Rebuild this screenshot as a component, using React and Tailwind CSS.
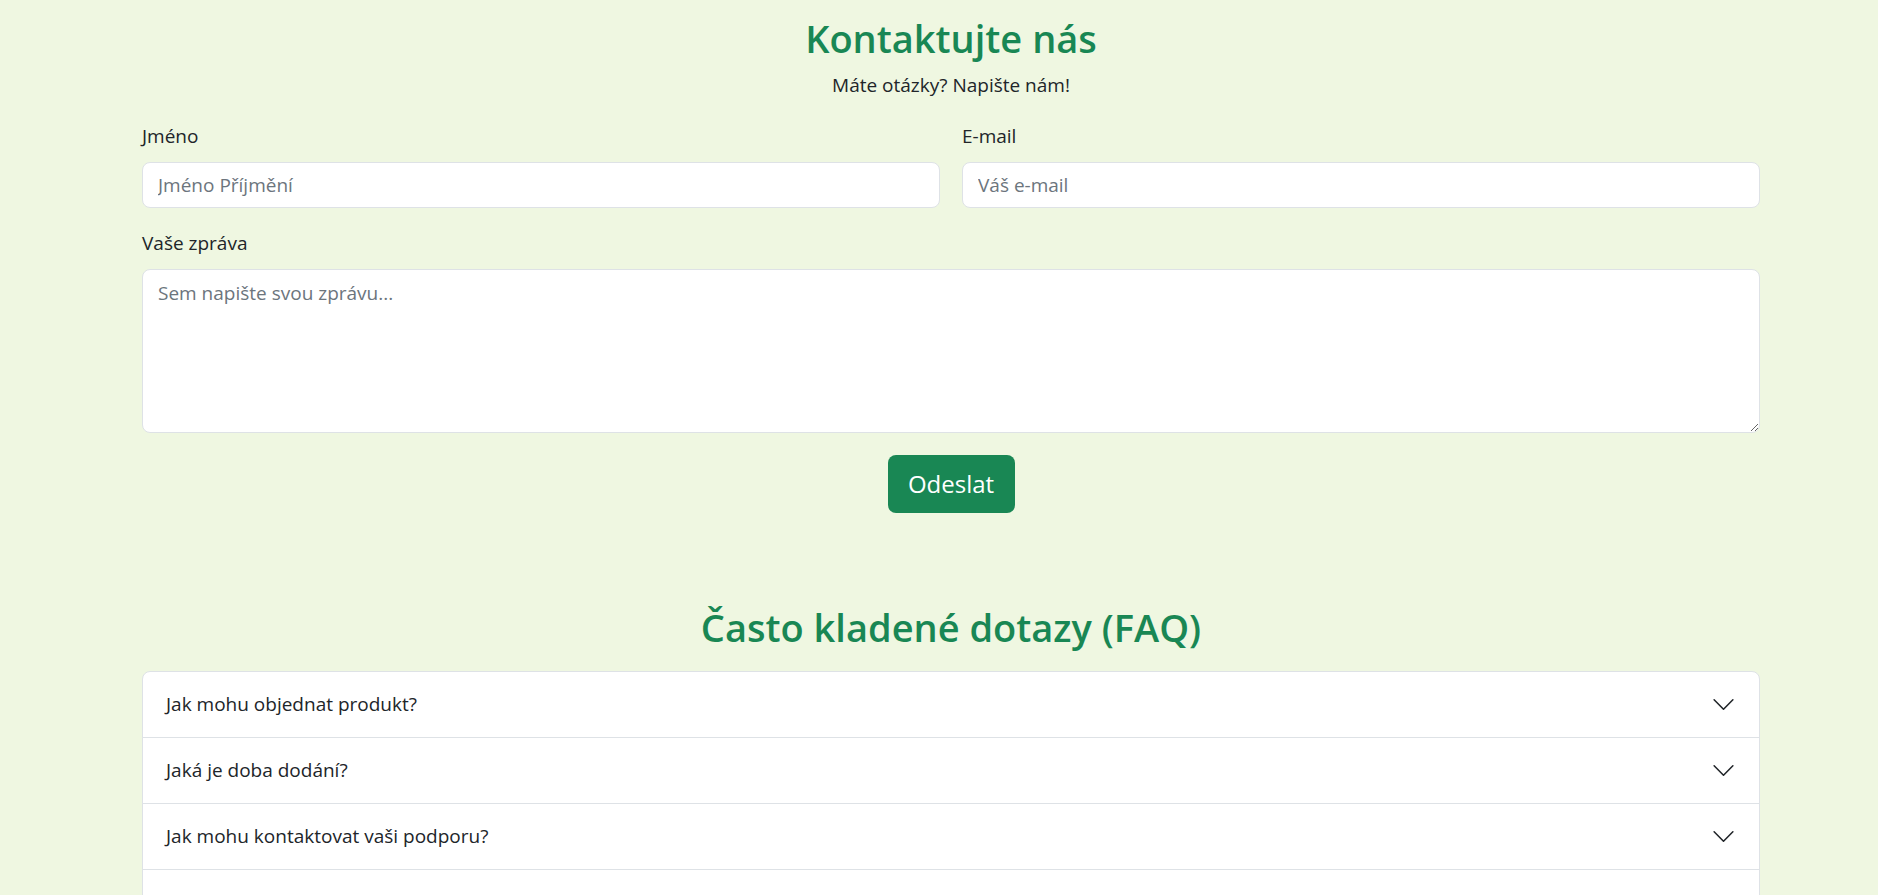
import { useState } from 'react'

const faqs = [
  { q: 'Jak mohu objednat produkt?', a: 'Vyberte si produkt, vložte ho do košíku a dokončete objednávku.' },
  { q: 'Jaká je doba dodání?', a: 'Obvykle doručujeme do 2–3 pracovních dnů.' },
  { q: 'Jak mohu kontaktovat vaši podporu?', a: 'Napište nám přes formulář výše nebo na e-mail.' },
  { q: 'Mohu zboží vrátit?', a: 'Ano, do 14 dnů od převzetí.' },
]

const Chevron = () => (
  <svg width="25" height="25" viewBox="0 0 16 16" fill="none" className="shrink-0">
    <path d="M2 5L8 11L14 5" stroke="#212529" strokeLinecap="round" strokeLinejoin="round" />
  </svg>
)

const App = () => {
  const [open, setOpen] = useState(null)

  return (
    <div className="min-h-screen bg-[#eff7e1] font-['Segoe_UI','Open_Sans',sans-serif] text-[#212529]">
      <div className="ml-[142px] w-[1618px] pt-[14px] pb-10">
        <h2 className="text-center text-[38px] leading-[48px] font-semibold text-[#198754]">Kontaktujte nás</h2>
        <p className="mt-[8px] text-center text-[19px] leading-[30px]">Máte otázky? Napište nám!</p>

        <form className="mt-[21px]" onSubmit={(e) => e.preventDefault()}>
          <div className="grid grid-cols-2 gap-x-[22px]">
            <div>
              <label className="block text-[19px] leading-[30px]">Jméno</label>
              <input
                type="text"
                placeholder="Jméno Příjmění"
                className="mt-[11px] h-[46px] w-full rounded-[8px] border border-[#dee2e6] bg-white px-[15px] text-[19px] outline-none placeholder:text-[#6c757d]"
              />
            </div>
            <div>
              <label className="block text-[19px] leading-[30px]">E-mail</label>
              <input
                type="email"
                placeholder="Váš e-mail"
                className="mt-[11px] h-[46px] w-full rounded-[8px] border border-[#dee2e6] bg-white px-[15px] text-[19px] outline-none placeholder:text-[#6c757d]"
              />
            </div>
          </div>

          <div className="mt-[20px]">
            <label className="block text-[19px] leading-[30px]">Vaše zpráva</label>
            <textarea
              placeholder="Sem napište svou zprávu..."
              className="mt-[11px] block h-[164px] w-full rounded-[8px] border border-[#dee2e6] bg-white px-[15px] py-[8px] text-[19px] leading-[30px] outline-none placeholder:text-[#6c757d]"
            />
          </div>

          <div className="mt-[22px] flex justify-center">
            <button className="h-[58px] w-[127px] rounded-[8px] bg-[#198754] text-[24px] text-white">Odeslat</button>
          </div>
        </form>

        <h2 className="mt-[90px] text-center text-[38px] leading-[48px] font-semibold text-[#198754]">Často kladené dotazy (FAQ)</h2>

        <div className="mt-[20px] overflow-hidden rounded-[8px] border border-[#dee2e6] bg-white">
          {faqs.map((item, i) => (
            <div key={item.q} className={i > 0 ? 'border-t border-[#dee2e6]' : ''}>
              <button
                onClick={() => setOpen(open === i ? null : i)}
                className="flex h-[65px] w-full items-center justify-between px-[23px] text-left text-[19px]"
              >
                <span>{item.q}</span>
                <Chevron />
              </button>
              {open === i && <div className="px-[23px] pb-4 text-[19px]">{item.a}</div>}
            </div>
          ))}
        </div>
      </div>
    </div>
  )
}

export default App
